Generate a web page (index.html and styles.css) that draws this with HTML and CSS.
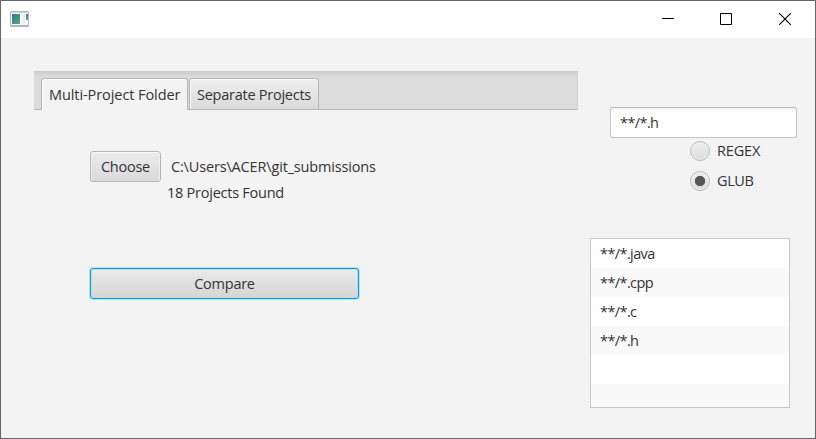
FILE: index.html
```html
<!DOCTYPE html>
<html lang="en">
<head>
<meta charset="utf-8">
<title>Project comparison</title>
<link rel="stylesheet" href="styles.css">
</head>
<body>
<div class="window">
  <header class="titlebar">
    <svg class="app-icon" width="19" height="16" viewBox="0 0 19 16">
      <defs>
        <linearGradient id="pane" x1="0" y1="0" x2="1" y2="1"><stop offset="0" stop-color="#3b6ea9"/><stop offset="1" stop-color="#49b069"/></linearGradient>
        <linearGradient id="bar" x1="0" y1="0" x2="0" y2="1"><stop offset="0" stop-color="#4774c0"/><stop offset="1" stop-color="#57b36e"/></linearGradient>
      </defs>
      <rect width="19" height="16" rx="1" fill="#b3b7bb"/>
      <rect x="1" y="1" width="17" height="1" fill="#d5d8da"/>
      <rect x="1" y="2" width="17" height="12" fill="#f8f9fa"/>
      <rect x="2" y="3" width="8" height="10" fill="url(#pane)"/>
      <path d="M12 3h3v10h-3z" fill="#ececec"/>
      <rect x="16" y="3" width="2" height="6" fill="url(#bar)"/>
    </svg>
    <div class="controls">
      <svg width="12" height="12" viewBox="0 0 12 12"><path d="M0 5.5h12" stroke="#000"/></svg>
      <svg width="12" height="12" viewBox="0 0 12 12"><path d="M.5.5h11v11H.5z" fill="none" stroke="#000"/></svg>
      <svg width="12" height="12" viewBox="0 0 12 12"><path d="M.2.2l11.6 11.6M11.8.2L.2 11.8" stroke="#000" stroke-width="1.1"/></svg>
    </div>
  </header>
  <main class="content">
    <section class="projects">
      <nav class="tabs">
        <div class="tab selected"><span class="t-multi">Multi-Project Folder</span></div>
        <div class="tab"><span class="t-separate">Separate Projects</span></div>
      </nav>
      <div class="panel">
        <div class="folder-row">
          <button class="button choose"><span class="t-choose">Choose</span></button>
          <span class="path">C:\Users\ACER\git_submissions</span>
        </div>
        <div class="found">18 Projects Found</div>
        <button class="button compare"><span class="t-compare">Compare</span></button>
      </div>
    </section>
    <aside class="filters">
      <div class="field">**/*.h</div>
      <div class="options">
        <div class="option"><i class="radio"></i><span class="t-regex">REGEX</span></div>
        <div class="option"><i class="radio checked"></i><span class="t-glub">GLUB</span></div>
      </div>
      <ul class="list">
        <li>**/*.java</li>
        <li>**/*.cpp</li>
        <li>**/*.c</li>
        <li>**/*.h</li>
        <li></li>
        <li></li>
      </ul>
    </aside>
  </main>
</div>
</body>
</html>
```
FILE: styles.css
```css
* { box-sizing: border-box; }
body {
  margin: 0;
  font: 14.5px/20px "Open Sans", "Noto Sans", sans-serif;
  letter-spacing: -0.25px;
  color: #333;
  white-space: nowrap;
}
.window {
  width: 816px;
  height: 439px;
  border: 1px solid #666;
  background: #f3f3f3;
  overflow: hidden;
}
.titlebar {
  height: 37px;
  padding: 10px 24px 0 9px;
  background: #fff;
  display: flex;
  justify-content: space-between;
}
.titlebar svg { display: block; }
.controls { display: flex; gap: 46px; padding-top: 2px; }
.controls svg:last-child { margin-left: 1px; }
.content { display: flex; padding: 33px 0 0 33px; }
.projects { width: 544px; }
.tabs {
  height: 39px;
  display: flex;
  gap: 1px;
  padding: 7px 0 0 7px;
  background:
    linear-gradient(#b5b5b5, #b5b5b5) bottom / 100% 1px no-repeat,
    linear-gradient(#cbcbcb, #dcdcdc 6px, #dcdcdc);
  border-right: 1px solid #d0d0d0;
}
.tab {
  width: 130px;
  height: 32px;
  padding: 6px 0 0 7px;
  border: 1px solid #b5b5b5;
  border-radius: 3px 3px 0 0;
  background: linear-gradient(#efefef, #dadada);
  box-shadow: inset 1px 1px 0 #fafafa;
}
.tab.selected { width: 147px; border-bottom: 0; background: #f3f3f3; box-shadow: inset 1px 1px 0 #fff; }
.t-multi { letter-spacing: -0.08px; }
.panel { padding: 41px 0 0 56px; }
.folder-row { display: flex; gap: 10px; align-items: center; }
.path { letter-spacing: -0.16px; }
.button {
  display: block;
  height: 31px;
  padding: 0;
  font: inherit;
  letter-spacing: inherit;
  color: inherit;
  border: 1px solid #b5b5b5;
  border-radius: 3px;
  background: linear-gradient(#ececec, #d9d9d9);
  box-shadow: inset 0 1px 0 #f8f8f8, inset 1px 0 0 #eee, inset -1px 0 0 #eee;
}
.choose { width: 71px; }
.found { margin: 1px 0 0 77px; }
.compare {
  width: 269px;
  margin-top: 65px;
  border-color: #039ed3;
  background: linear-gradient(#ebebeb, #d5d5d5);
  box-shadow: 0 0 0 1px #b8e0ee, inset 0 0 0 1px #c5dce2;
}
.filters { width: 207px; margin: 36px 0 0 12px; }
.field,
.list { letter-spacing: -0.6px; }
.field {
  width: 187px;
  height: 31px;
  margin-left: 20px;
  padding: 5px 9px;
  border: 1px solid #c4c4c4;
  border-top-color: #b8b8b8;
  border-radius: 3px;
  background: linear-gradient(#f3f3f3, #fff 4px);
}
.options { display: grid; gap: 10px; margin: 3px 0 0 100px; }
.option { display: flex; gap: 7px; height: 20px; }
.t-regex { letter-spacing: -0.15px; }
.t-glub { letter-spacing: -0.4px; }
.radio {
  width: 20px;
  height: 20px;
  border: 1px solid #b9b9b9;
  border-radius: 50%;
  background: linear-gradient(#efefef, #dcdcdc);
  box-shadow: inset 0 0 0 1px #f1f1f1;
}
.radio.checked { background: radial-gradient(circle, #555 4.8px, transparent 5.5px), linear-gradient(#efefef, #dcdcdc); }
.list {
  width: 200px;
  height: 170px;
  margin: 47px 0 0;
  padding: 0;
  list-style: none;
  border: 1px solid #c8c8c8;
  background: #fff;
  overflow: hidden;
}
.list li { height: 29px; padding: 5px 9px; }
.list li:nth-child(even) { background: #f9f9f9; }
```
